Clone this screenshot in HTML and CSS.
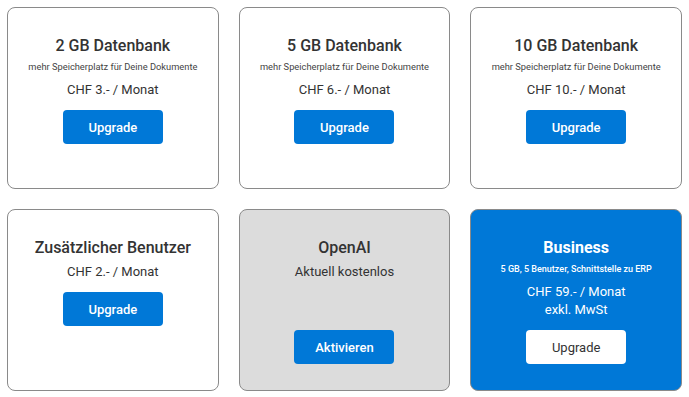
FILE: index.html
```html
<!DOCTYPE html>
<html lang="de">
<head>
  <meta charset="UTF-8" />
  <title>Upgrades</title>
  <link rel="stylesheet" href="styles.css">
</head>
<body>

  <div class="plans">
    <div class="plan-card">
      <h3>2 GB Datenbank</h3>
      <p class="plan-note">mehr Speicherplatz für Deine Dokumente</p>
      <p class="plan-price">CHF 3.- / Monat</p>
      <button type="button" class="plan-btn">Upgrade</button>
    </div>

    <div class="plan-card">
      <h3>5 GB Datenbank</h3>
      <p class="plan-note">mehr Speicherplatz für Deine Dokumente</p>
      <p class="plan-price">CHF 6.- / Monat</p>
      <button type="button" class="plan-btn">Upgrade</button>
    </div>

    <div class="plan-card">
      <h3>10 GB Datenbank</h3>
      <p class="plan-note">mehr Speicherplatz für Deine Dokumente</p>
      <p class="plan-price">CHF 10.- / Monat</p>
      <button type="button" class="plan-btn">Upgrade</button>
    </div>

    <div class="plan-card">
      <h3>Zusätzlicher Benutzer</h3>
      <p class="plan-price">CHF 2.- / Monat</p>
      <button type="button" class="plan-btn">Upgrade</button>
    </div>

    <div class="plan-card plan-card--muted">
      <h3>OpenAI</h3>
      <p class="plan-price">Aktuell kostenlos</p>
      <button type="button" class="plan-btn plan-btn--low">Aktivieren</button>
    </div>

    <!-- Featured plan -->
    <div class="plan-card plan-card--featured">
      <h3>Business</h3>
      <p class="plan-note">5 GB, 5 Benutzer, Schnittstelle zu ERP</p>
      <p class="plan-price">CHF 59.- / Monat<br>exkl. MwSt</p>
      <button type="button" class="plan-btn">Upgrade</button>
    </div>
  </div>

</body>
</html>
```

FILE: styles.css
```css
* {
  box-sizing: border-box;
}

body {
  margin: 0;
  background: #fff;
  font-family: Roboto, 'Liberation Sans', sans-serif;
  color: #333;
}

.plans {
  display: grid;
  grid-template-columns: repeat(3, 1fr);
  gap: 20px;
  padding: 7px;
}

.plan-card {
  height: 182px;
  padding: 28px 8px 0;
  border: 1px solid #8a8a8a;
  border-radius: 8px;
  background: #fff;
  text-align: center;
}

.plan-card h3 {
  margin: 0 0 5px;
  font-size: 16px;
  line-height: 20px;
  font-weight: 500;
  color: #333;
}

.plan-note {
  margin: 0 0 8px;
  font-size: 9.3px;
  line-height: 12px;
  color: #444;
}

.plan-price {
  margin: 0;
  font-size: 13px;
  line-height: 18px;
  color: #333;
}

.plan-btn {
  display: block;
  width: 100px;
  height: 34px;
  margin: 11px auto 0;
  border: none;
  border-radius: 4px;
  background-color: #0078d7;
  color: #fff;
  font-family: inherit;
  font-size: 13px;
  font-weight: 500;
  cursor: pointer;
}

.plan-btn--low {
  margin-top: 49px;
}

.plan-card--muted {
  background: #dcdcdc;
}

.plan-card--featured {
  background: #0078d7;
}

.plan-card--featured h3,
.plan-card--featured .plan-note,
.plan-card--featured .plan-price {
  color: #fff;
}

.plan-card--featured h3 {
  font-weight: 700;
}

.plan-card--featured .plan-note {
  font-size: 9px;
  font-weight: 500;
}

.plan-card--featured .plan-btn {
  background: #fff;
  color: #333;
  font-weight: 400;
}
```
